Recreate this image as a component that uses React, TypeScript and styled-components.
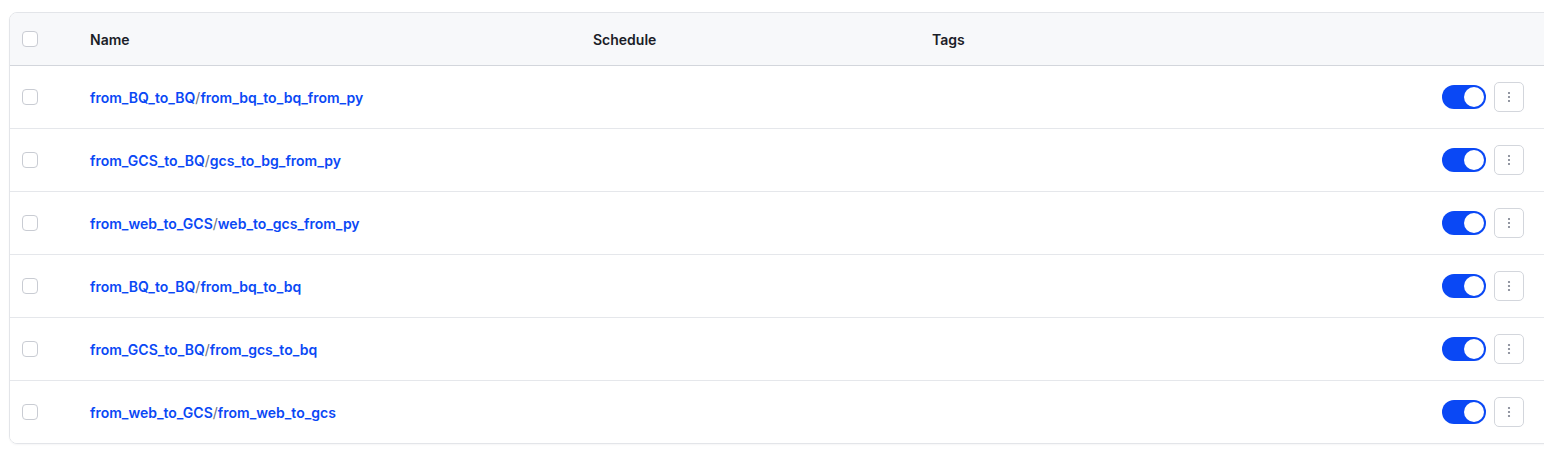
import styled, { createGlobalStyle } from 'styled-components'

const GlobalStyle = createGlobalStyle`
  body {
    margin: 0;
    background: #ffffff;
    font-family: Inter, "Noto Sans", sans-serif;
    overflow: hidden;
  }
`

const Page = styled.div`
  padding: 12px 0 0 9px;
  width: 1544px;
  height: 463px;
  box-sizing: border-box;
  overflow: hidden;
`

const Table = styled.div`
  width: 1560px;
  border: 1px solid #e3e5e9;
  border-radius: 8px;
  overflow: hidden;
  box-shadow: 0 1px 2px rgba(16, 24, 40, 0.04);
`

const Row = styled.div<{ $head?: boolean }>`
  display: grid;
  grid-template-columns: 80px 503px 339px 1fr auto;
  align-items: center;
  height: ${(p) => (p.$head ? '52px' : '62px')};
  padding-right: 46px;
  background: ${(p) => (p.$head ? '#f7f8fa' : '#ffffff')};
  border-bottom: 1px solid ${(p) => (p.$head ? '#d3d6dc' : '#e5e7eb')};
  &:last-child {
    border-bottom: none;
  }
`

const CheckCell = styled.div`
  padding-left: 12px;
  display: flex;
  align-items: center;
`

const Check = styled.span`
  width: 14px;
  height: 14px;
  border: 1px solid #c9ccd3;
  border-radius: 4px;
  background: #fff;
`

const HeadText = styled.div`
  font-size: 14px;
  font-weight: 600;
  color: #1b1d28;
`

const NameLink = styled.a`
  font-size: 14px;
  font-weight: 600;
  color: #0a48f5;
  text-decoration: none;
`

const Slash = styled.span`
  color: #6b7080;
  font-weight: 400;
`

const Actions = styled.div`
  display: flex;
  align-items: center;
  gap: 8px;
`

const Toggle = styled.span`
  width: 44px;
  height: 24px;
  border-radius: 12px;
  background: #0a48f5;
  display: flex;
  align-items: center;
  justify-content: flex-end;
  padding: 2px;
  box-sizing: border-box;
`

const Knob = styled.span`
  width: 20px;
  height: 20px;
  border-radius: 50%;
  background: #fff;
`

const MenuButton = styled.button`
  width: 30px;
  height: 30px;
  border: 1px solid #d3d6dc;
  border-radius: 5px;
  background: #fff;
  display: flex;
  align-items: center;
  justify-content: center;
  padding: 0;
`

const dags = [
  ['from_BQ_to_BQ', 'from_bq_to_bq_from_py'],
  ['from_GCS_to_BQ', 'gcs_to_bg_from_py'],
  ['from_web_to_GCS', 'web_to_gcs_from_py'],
  ['from_BQ_to_BQ', 'from_bq_to_bq'],
  ['from_GCS_to_BQ', 'from_gcs_to_bq'],
  ['from_web_to_GCS', 'from_web_to_gcs'],
]

const Dots = () => (
  <svg width="4" height="12" viewBox="0 0 4 12">
    <circle cx="2" cy="2" r="1.1" fill="#7a7f8c" />
    <circle cx="2" cy="6" r="1.1" fill="#7a7f8c" />
    <circle cx="2" cy="10" r="1.1" fill="#7a7f8c" />
  </svg>
)

export default function App() {
  return (
    <Page>
      <GlobalStyle />
      <Table>
        <Row $head>
          <CheckCell><Check /></CheckCell>
          <HeadText>Name</HeadText>
          <HeadText>Schedule</HeadText>
          <HeadText>Tags</HeadText>
          <div />
        </Row>
        {dags.map(([folder, name], i) => (
          <Row key={i}>
            <CheckCell><Check /></CheckCell>
            <div>
              <NameLink href="#">
                {folder}<Slash>/</Slash>{name}
              </NameLink>
            </div>
            <div />
            <div />
            <Actions>
              <Toggle><Knob /></Toggle>
              <MenuButton><Dots /></MenuButton>
            </Actions>
          </Row>
        ))}
      </Table>
    </Page>
  )
}
